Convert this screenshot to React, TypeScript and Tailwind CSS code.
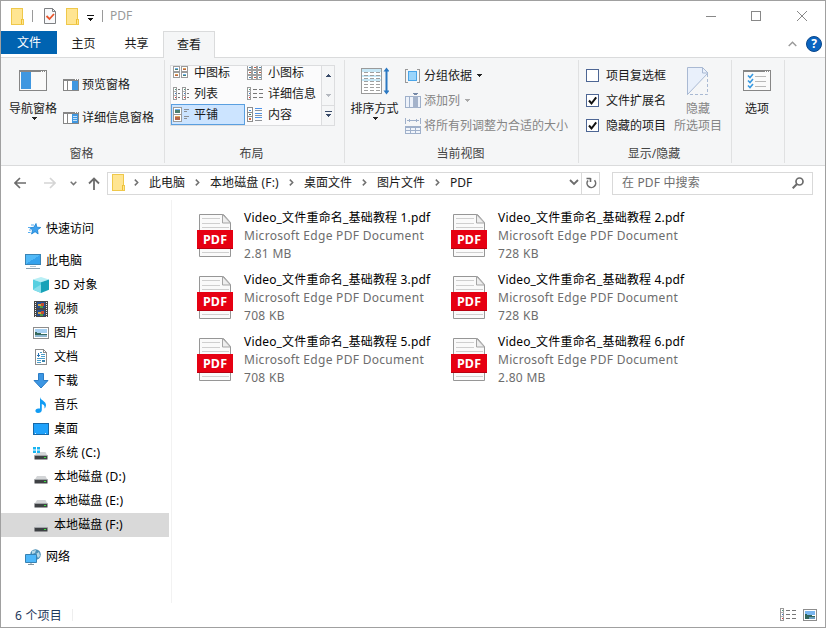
import type { ReactNode } from 'react';
import clsx from 'clsx';

function Svg({ w, h, children, smooth, className }: { w: number; h: number; children: ReactNode; smooth?: boolean; className?: string }) {
    return (
        <svg width={w} height={h} viewBox={`0 0 ${w} ${h}`} fill="none" shapeRendering={smooth ? 'auto' : 'crispEdges'} className={clsx('shrink-0 block', className)}>
            {children}
        </svg>
    );
}

const Folder = () => (
    <Svg w={14} h={17}>
        <path d="M.5 .5h11v11h1v5h-12z" fill="#ffe592" stroke="#efc84a" />
        <path d="M10.500 11v5" stroke="#efc030" />
    </Svg>
);

const CheckDoc = () => (
    <Svg w={12} h={16} smooth>
        <path d="M.5 .5h8l3 3v12h-11z" fill="#f8f9fb" stroke="#7e8083" />
        <path d="M8.500 .5v3h3" stroke="#7e8083" />
        <path d="M2.500 8l3 3 4.500-5" stroke="#e8552c" strokeWidth="1.800" />
    </Svg>
);

const Down = ({ color = '#222', className }: { color?: string; className?: string }) => (
    <Svg w={5} h={3} className={className}>
        <path d="M0 0h5v1h-1v1h-1v1h-1v-1h-1v-1h-1z" fill={color} />
    </Svg>
);

const Chevron = ({ className }: { className?: string }) => (
    <Svg w={5} h={7} smooth className={className}>
        <path d="M.8 .6l2.900 2.900-2.900 2.900" stroke="#707070" strokeWidth="1.500" />
    </Svg>
);

const NavPaneIcon = () => (
    <Svg w={28} h={21}>
        <path d="M0 0h28v21h-28z" fill="#868686" />
        <path d="M1 2h26v18h-26z" fill="#fafafa" />
        <path d="M2 2h10v17h-10z" fill="#3f97e0" />
        <path d="M22 1h1M24 1h1M26 1h1" stroke="#fff" />
    </Svg>
);

const PreviewIcon = ({ details }: { details?: boolean }) => (
    <Svg w={16} h={12}>
        <path d="M0 0h16v12h-16z" fill="#868686" />
        <path d="M1 2h3v9h-3zM5 2h4v9h-4z" fill="#fff" />
        <path d="M9 2h6v9h-6z" fill="#3f97e0" />
        {details && <path d="M10 4.500h4M10 6.500h4M10 8.500h4" stroke="#c4e1fa" />}
        <path d="M12 .5h1M14 .5h1" stroke="#fff" />
    </Svg>
);

const Thumb = ({ x, y, w = 6, h = 5, alt }: { x: number; y: number; w?: number; h?: number; alt?: boolean }) => (
    <g>
        <rect x={x + .5} y={y + .5} width={w} height={h} fill="#fff" stroke="#9b9b9b" />
        <rect x={x + 2} y={y + 2} width={w - 3} height={1} fill={alt ? '#e0a25a' : '#6fb0ec'} />
        <rect x={x + 2} y={y + 3} width={w - 3} height={h - 4} fill={alt ? '#b5664a' : '#4b7f70'} />
    </g>
);

const MediumIcon = () => (
    <Svg w={15} h={13}>
        <Thumb x={0} y={0} /><Thumb x={8} y={0} alt />
        <Thumb x={0} y={6} alt /><Thumb x={8} y={6} />
    </Svg>
);

const SmallIcon = () => (
    <Svg w={16} h={14}>
        {[0, 5, 10].map((y) => [0, 5, 10].map((x) => (
            <g key={`${x}-${y}`}>
                <rect x={x + .5} y={y - .5} width="4" height="4" fill="#fff" stroke="#a0a0a0" />
                <rect x={x + 2} y={y + 1} width="2" height="1" fill={(x + y) % 2 ? '#c15b42' : '#4987b5'} />
            </g>
        )))}
    </Svg>
);

const ListIcon = ({ wide }: { wide?: boolean }) => (
    <Svg w={16} h={13}>
        {(wide ? [0] : [0, 9]).map((x) => (
            <g key={x}>
                <rect x={x + .5} y=".5" width="3" height="12" fill="#fff" stroke="#9a9a9a" />
                <path d={`M${x + 1} 4.500h3M${x + 1} 8.500h3`} stroke="#b0b0b0" />
                <rect x={x + 2} y="2" width="1" height="1" fill="#4c9a7b" />
                <rect x={x + 2} y="6" width="1" height="1" fill="#3c78cc" />
                <rect x={x + 2} y="10" width="1" height="1" fill="#e03030" />
                {!wide && <path d={`M${x + 5} 2.500h2M${x + 5} 6.500h2M${x + 5} 10.500h2`} stroke="#777" />}
            </g>
        ))}
        {wide && <path d="M6 2.500h4M12 2.500h4M6 6.500h4M12 6.500h4M6 10.500h4M12 10.500h4" stroke="#777" />}
    </Svg>
);

const TilesIcon = () => (
    <Svg w={16} h={15}>
        <Thumb x={0} y={0} w={8} h={7} /><Thumb x={0} y={7} w={8} h={7} alt />
        <path d="M11 2.500h5M11 4.500h3M11 9.500h5M11 11.500h3" stroke="#8b8f95" />
    </Svg>
);

const ContentIcon = () => (
    <Svg w={15} h={15}>
        <path d="M.5 .5h5v14h-5zM0 5.500h6M0 9.500h6" fill="#fff" stroke="#8e8e8e" />
        <path d="M2 3h2v1h-2z" fill="#4a90e2" /><path d="M2 7h2v1h-2z" fill="#426d57" /><path d="M2 11h2v2h-2z" fill="#d56a45" />
        <path d="M8 1.500h7M8 6.500h7M8 10.500h7" stroke="#4f93e8" />
        <path d="M8 3.500h7M8 8.500h7M8 13.500h7" stroke="#8f9297" />
    </Svg>
);

const SortIcon = () => (
    <Svg w={28} h={28}>
        <path d="M.5 1.500h20v25h-20z" fill="#fff" stroke="#9a9a9a" />
        <path d="M1 2h19v3h-19zM1 8h19v2h-19zM1 12h19v2h-19z" fill="#c6e7f6" />
        {[5, 8, 11, 14, 17, 20, 23].map((y) => (
            <path key={y} d={`M3 ${y + .5}h4M9 ${y + .5}h4M15 ${y + .5}h4`} stroke="#a0a0a0" />
        ))}
        <path d="M25.500 3v22" stroke="#2b78c2" strokeWidth="2" shapeRendering="auto" />
        <path d="M22.500 4.500l3-4 3 4zM22.500 23.500l3 4 3-4z" fill="#2b78c2" shapeRendering="auto" />
    </Svg>
);

const GroupIcon = () => (
    <Svg w={16} h={14}>
        <path d="M3 .5h-2.500v13h2.500M12 .5h2.500v13h-2.500" stroke="#999" />
        <path d="M3.500 2.500h8v9h-8z" fill="#9bd5fb" stroke="#4aa5e8" />
    </Svg>
);

const AddColumnIcon = () => (
    <Svg w={16} h={15}>
        <path d="M.5 3.500h15v11h-15zM4.500 3v12" fill="#edf2fa" stroke="#9fb0ca" />
        <path d="M8 3h5v12h-5z" fill="#a4b3cb" />
        <path d="M8 0h5v1h-1v1h-3v-1h-1z" fill="#7689a8" />
    </Svg>
);

const FitIcon = () => (
    <Svg w={16} h={16}>
        <path d="M.5 0v6M15.500 0v6M2 2.500h12M4.500 1v3M3.500 2v1M11.500 1v3M12.500 2v1" stroke="#9fb0ca" />
        <path d="M0 8h16v8h-16z" fill="#9fb0ca" />
        <path d="M1 10h4v2h-4zM6 10h4v2h-4zM11 10h4v2h-4zM1 13h4v2h-4zM6 13h4v2h-4zM11 13h4v2h-4z" fill="#f1f5fb" />
    </Svg>
);

const HideIcon = () => (
    <Svg w={22} h={28} smooth>
        <path d="M.5 27.500v-27h15l5.500 5.500z" fill="#e9f0fb" />
        <path d="M.5 27.500v-27h15l5.500 5.500-20.500 21.500" stroke="#a9b9d3" />
        <path d="M15.500 .5v5.500h5.500" stroke="#a9b9d3" />
        <path d="M20.500 7v20.500h-20" stroke="#a9b9d3" strokeDasharray="3 2" />
    </Svg>
);

const OptionsIcon = () => (
    <Svg w={28} h={21}>
        <path d="M0 0h28v21h-28z" fill="#868686" />
        <path d="M1 2h26v18h-26z" fill="#fafafa" />
        <path d="M22 1h1M24 1h1M26 1h1" stroke="#fff" />
        <path d="M12 6.500h11M12 11.500h11M12 16.500h11" stroke="#b8b8b8" />
        <path d="M5 5.500l2 2 3-3.500M5 10.500l2 2 3-3.500M5 15.500l2 2 3-3.500" stroke="#3698e0" strokeWidth="1.600" shapeRendering="auto" />
    </Svg>
);

const PdfIcon = () => (
    <Svg w={36} h={43} smooth className="text-white">
        <path d="M2.500 .5h24l7 8v34h-31z" fill="#fafafa" stroke="#969696" />
        <path d="M25.500 .5v8.500h8z" fill="#eee" stroke="#a5a5a5" />
        <path d="M5 4.500h18M5 9.500h18M5 13.500h27M5 38.500h27" stroke="#cfcfcf" />
        <path d="M0 16h36v19h-36z" fill="#e60012" />
        <path d="M0 34h36v1h-36z" fill="#b80010" />
        <text x="18" y="30" textAnchor="middle" fontSize="12.500" fontWeight="700" fill="currentColor" fontFamily="Noto Sans" textLength="24">PDF</text>
    </Svg>
);

const Drive = ({ system }: { system?: boolean }) => (
    <Svg w={16} h={16} smooth>
        <path d="M4 7h8.500l2 4h-13z" fill="#d3d5d7" />
        <path d="M1.500 10.500h13v4h-13z" fill="#3e4144" />
        <path d="M1.500 10.500h13" stroke="#a2a5a8" />
        <path d="M11 12h2v1h-2z" fill="#38e23c" />
        {system && (
            <>
                <path d="M0 2h7v6h-7z" fill="#fff" />
                <path d="M0 2h3v2.500h-3zM4 2h3v2.500h-3zM0 5.500h3v2.500h-3zM4 5.500h3v2.500h-3z" fill="#18b4f1" />
            </>
        )}
    </Svg>
);

const icons: Record<string, ReactNode> = {
    star: (
        <Svg w={16} h={16} smooth className="ml-1">
            <path d="M9 2.500l.8 3.700 4 .3-3.300 2.300.6 4.200-3-2.300-3.600 2.300 1.200-4-3-2.300 4.200-.4z" fill="#3da1ee" stroke="#1781d2" strokeWidth=".8" />
            <path d="M4 4h3M1 6.500h2.500M2 9h2.500M1 11.500h2.500" stroke="#55adf0" />
        </Svg>
    ),
    pc: (
        <Svg w={16} h={16}>
            <path d="M.5 1.500h15v10h-15z" fill="#51b9f7" stroke="#3a84b5" />
            <path d="M1 11l14-9v9z" fill="#35a2ed" />
            <path d="M5 13.500h6" stroke="#b5c5cf" /><path d="M1 15h14" stroke="#8ba1b0" />
        </Svg>
    ),
    cube: (
        <Svg w={16} h={16} smooth>
            <path d="M8 0l8 2.500-8 2.800-8-2.800z" fill="#b8eff5" />
            <path d="M0 2.500l8 2.800v10.700l-8-3.200z" fill="#56cfe0" />
            <path d="M16 2.500l-8 2.800v10.700l8-3.200z" fill="#17a2b8" />
            <path d="M0 12.500l8-5v8.500z" fill="#87deeb" />
        </Svg>
    ),
    video: (
        <Svg w={16} h={16}>
            <path d="M1 0h14v16h-14z" fill="#474747" />
            <path d="M4 1h8v6h-8zM4 9h8v6h-8z" fill="#254f91" />
            <path d="M5 3h4v2h-4zM5 11h4v2h-4z" fill="#d9a63c" />
            <path d="M8 2h3v3h-3zM8 10h3v3h-3z" fill="#c34d30" />
            <path d="M7 5h3v2h-3zM7 13h3v2h-3z" fill="#4f9a46" />
            <path d="M2.500 1v15M13.500 1v15" stroke="#eee" strokeDasharray="1 1" />
        </Svg>
    ),
    picture: (
        <Svg w={16} h={12}>
            <path d="M.5 .5h15v11h-15z" fill="#fff" stroke="#8d8d8d" />
            <path d="M2 2h12v4h-12z" fill="#a6d0f2" /><path d="M2 5l4 1 4 1h4v1h-12z" fill="#35695c" /><path d="M2 8h12v2h-12z" fill="#8fb7d0" />
        </Svg>
    ),
    doc: (
        <Svg w={12} h={16}>
            <path d="M.5 .5h8l3 3v12h-11z" fill="#fff" stroke="#8d8d8d" />
            <path d="M8.500 .5v3h3" stroke="#8d8d8d" />
            <path d="M5 3.500h2M6 5.500h4M6 7.500h4M2 9.500h8M2 11.500h4M2 13.500h4" stroke="#4b9dc9" />
            <path d="M3.500 4v4M2 6.500h3" stroke="#2b76b6" /><path d="M7 11h3v2h-3z" fill="#3b83ad" />
        </Svg>
    ),
    download: (
        <Svg w={16} h={16} smooth>
            <path d="M5.500 .5h5v7h4.500l-7 7.500-7-7.500h4.500z" fill="#3c96e3" stroke="#2b7cc5" />
        </Svg>
    ),
    music: (
        <Svg w={16} h={16} smooth>
            <path d="M7 0c.5 3.500 6 4 6 8 0 1.500-.8 3-1.500 3.500.5-3-1-4-2.700-4.500v6c0 2-1.500 3-3.800 3-3.500 0-3.500-4.500 .3-4.500h1.700z" fill="#119cf4" />
        </Svg>
    ),
    desktop: (
        <Svg w={16} h={12}>
            <path d="M.5 .5h15v11h-15z" fill="#20a2fb" stroke="#1768a7" />
            <path d="M2 10.500h12" stroke="#d5eafa" strokeDasharray="1 9 1 1" />
        </Svg>
    ),
    network: (
        <Svg w={16} h={16} smooth>
            <circle cx="10.500" cy="5.500" r="5.300" fill="#4d91b8" />
            <path d="M7 2l4-1-1 3-3 1zM11 5l3-2 1 4-2 2z" fill="#b8d9e7" />
            <path d="M.5 5.500h11v8h-11z" fill="#4db7fa" stroke="#3781b1" />
            <path d="M6 14v1M3 15.500h6" stroke="#8295a0" />
        </Svg>
    ),
    drive: <Drive />,
    system: <Drive system />,
};

const sidebar = [
    { icon: 'pc', label: '此电脑', root: true },
    { icon: 'cube', label: '3D 对象', className: 'tracking-[0.2px]' },
    { icon: 'video', label: '视频' },
    { icon: 'picture', label: '图片' },
    { icon: 'doc', label: '文档' },
    { icon: 'download', label: '下载' },
    { icon: 'music', label: '音乐' },
    { icon: 'desktop', label: '桌面' },
    { icon: 'system', label: '系统 (C:)', className: 'tracking-[0.15px]' },
    { icon: 'drive', label: '本地磁盘 (D:)', className: 'tracking-[0.15px]' },
    { icon: 'drive', label: '本地磁盘 (E:)', className: 'tracking-[0.1px]' },
    { icon: 'drive', label: '本地磁盘 (F:)', className: 'tracking-[0.1px]', active: true },
];

const files = ['2.81 MB', '728 KB', '708 KB', '728 KB', '708 KB', '2.80 MB'];

const layouts = [
    { icon: <MediumIcon />, label: '中图标' },
    { icon: <SmallIcon />, label: '小图标' },
    { icon: <ListIcon />, label: '列表' },
    { icon: <ListIcon wide />, label: '详细信息' },
    { icon: <TilesIcon />, label: '平铺', active: true },
    { icon: <ContentIcon />, label: '内容' },
];

function Group({ label, className, children }: { label?: string; className: string; children: ReactNode }) {
    return (
        <div className={clsx('flex flex-col shrink-0 h-[103px] mt-[2px] border-r border-[#e0e1e2]', className)}>
            <div className="flex h-[85px]">{children}</div>
            <div className="text-center leading-[18px] text-[#444] pr-[2px]">{label}</div>
        </div>
    );
}

function BigButton({ icon, label, arrow, className }: { icon: ReactNode; label: string; arrow?: boolean; className: string }) {
    return (
        <div className={clsx('flex flex-col items-center shrink-0', className)}>
            <div className="h-[40px] flex items-center justify-center pt-px">{icon}</div>
            <div className="leading-[17px] text-center whitespace-pre">{label}</div>
            {arrow && <Down className="ml-[2px]" />}
        </div>
    );
}

function SideRow({ icon, label, root, active, className }: { icon: string; label: string; root?: boolean; active?: boolean; className?: string }) {
    return (
        <div className={clsx('flex items-center h-6 w-[168px] whitespace-nowrap', root ? 'pl-6' : 'pl-8', active && 'bg-[#d9d9d9]')}>
            <div className="w-4 flex justify-center">{icons[icon]}</div>
            <span className={clsx('ml-[5px]', className)}>{label}</span>
        </div>
    );
}

function Check({ label, checked }: { label: string; checked?: boolean }) {
    return (
        <div className="flex items-center h-[25px]">
            <Svg w={13} h={13}>
                <path d="M.5 .5h12v12h-12z" fill="#fff" stroke="#4d6694" />
                {checked && <path d="M3 6.500l2.500 3 4.700-6.200" stroke="#111" strokeWidth="2" shapeRendering="auto" />}
            </Svg>
            <span className="ml-[7px]">{label}</span>
        </div>
    );
}

export default function App() {
    return (
        <div className="w-[826px] h-[628px] flex flex-col overflow-hidden border border-[#a0a0a0] bg-white text-[12px] leading-[18px] text-[#1a1a1a] whitespace-nowrap font-['Noto_Sans','Noto_Sans_CJK_SC',sans-serif]">
            {/* Title bar */}
            <div className="flex h-[30px] shrink-0 justify-between">
                <div className="flex items-center pl-[10px]">
                    <Folder />
                    <div className="w-px h-3 bg-[#9a9a9a] ml-[7px] mr-[11px]" />
                    <CheckDoc />
                    <div className="ml-[10px]"><Folder /></div>
                    <Svg w={7} h={6} className="ml-[7px] mt-[3px]">
                        <path d="M0 .5h7" stroke="#111" />
                        <path d="M1 3h5v1h-1v1h-1v1h-1v-1h-1v-1h-1z" fill="#111" />
                    </Svg>
                    <div className="w-px h-3 bg-[#9a9a9a] ml-2 mr-[7px]" />
                    <span className="text-[#999]">PDF</span>
                </div>
                <div className="flex items-center">
                    <div className="w-[45px] flex justify-center"><Svg w={10} h={11}><path d="M0 5.500h10" stroke="#888" /></Svg></div>
                    <div className="w-[45px] flex justify-center"><Svg w={10} h={10}><path d="M.5 .5h9v9h-9z" stroke="#888" /></Svg></div>
                    <div className="w-[47px] flex justify-center"><Svg w={10} h={10} smooth><path d="M0 0l10 10M10 0L0 10" stroke="#888" /></Svg></div>
                </div>
            </div>

            {/* Ribbon tabs */}
            <div className="flex h-[27px] shrink-0 border-b border-[#dadbdc]">
                <div className="w-14 h-[23px] leading-[23px] text-center bg-[#0063b1] text-white">文件</div>
                <div className="w-[53px] leading-[25px] text-center">主页</div>
                <div className="w-[53px] leading-[25px] text-center">共享</div>
                <div className="w-[52px] h-[27px] leading-[25px] text-center bg-[#f5f6f7] border border-b-0 border-[#dadbdc]">查看</div>
                <div className="flex-1 flex justify-end items-center gap-[9px] pr-[3px]">
                    <Svg w={9} h={6} smooth><path d="M.7 5l3.800-3.800 3.800 3.800" stroke="#999" strokeWidth="1.400" /></Svg>
                    <div className="w-4 h-4 rounded-full bg-[#0a64c0] border border-[#0a478b] text-white font-bold text-center leading-[14px]">?</div>
                </div>
            </div>

            {/* Ribbon */}
            <div className="flex h-[108px] shrink-0 bg-[#f5f6f7] border-b border-[#dadbdc]">
                <Group label="窗格" className="w-[164px]">
                    <BigButton className="w-[64px]" icon={<NavPaneIcon />} label="导航窗格" arrow />
                    <div className="pt-[8px]">
                        <div className="flex items-center h-[33px] -ml-[2px] gap-[3px]"><PreviewIcon />预览窗格</div>
                        <div className="flex items-center h-[33px] -ml-[2px] gap-[3px]"><PreviewIcon details />详细信息窗格</div>
                    </div>
                </Group>
                <Group label="布局" className="w-[180px] pl-[5px] pr-[9px]">
                    <div className="flex w-[165px] h-[61px] mt-[5px] border border-[#dcdddf] bg-[#fbfbfc] overflow-hidden">
                        <div className="grid grid-cols-[74px_74px] -mt-[4px] auto-rows-[21px] shrink-0 w-[150px]">
                            {layouts.map(({ icon, label, active }) => (
                                <div key={label} className={clsx('flex items-center border', active ? 'bg-[#cce4ff] border-[#5a9fe0]' : 'border-transparent')}>
                                    <div className="w-[16px] ml-px shrink-0">{icon}</div>
                                    <span className="ml-[5px]">{label}</span>
                                </div>
                            ))}
                        </div>
                        <div className="w-[13px] border-l border-[#dcdddf] flex flex-col bg-[#f5f6f7]">
                            <div className="h-5 flex items-center justify-center"><Down color="#394b69" className="rotate-180" /></div>
                            <div className="h-5 flex items-center justify-center"><Down color="#b5b9c0" /></div>
                            <div className="h-5 flex items-center justify-center border-t border-[#dcdddf] pb-[3px]">
                                <Svg w={7} h={6}><path d="M0 .5h7" stroke="#394b69" /><path d="M1 3h5v1h-1v1h-1v1h-1v-1h-1v-1h-1z" fill="#394b69" /></Svg>
                            </div>
                        </div>
                    </div>
                </Group>
                <Group label="当前视图" className="w-[234px]">
                    <BigButton className="w-[59px]" icon={<SortIcon />} label="排序方式" arrow />
                    <div className="pl-px pt-[3px] [&>div]:flex [&>div]:items-center [&>div]:h-[25px] [&>div]:gap-[3px]">
                        <div><GroupIcon />分组依据<Down className="ml-[2px]" /></div>
                        <div className="text-[#858585]"><AddColumnIcon />添加列<Down color="#aaa" className="ml-[2px]" /></div>
                        <div className="text-[#858585]"><FitIcon />将所有列调整为合适的大小</div>
                    </div>
                </Group>
                <Group label="显示/隐藏" className="w-[153px]">
                    <div className="pl-[7px] pt-[3px] w-[92px]">
                        <Check label="项目复选框" />
                        <Check label="文件扩展名" checked />
                        <Check label="隐藏的项目" checked />
                    </div>
                    <div className="text-[#858585]">
                        <BigButton className="w-[54px]" icon={<HideIcon />} label={'隐藏\n所选项目'} />
                    </div>
                </Group>
                <Group className="w-[53px]">
                    <BigButton className="w-[50px]" icon={<OptionsIcon />} label="选项" />
                </Group>
            </div>

            {/* Address bar */}
            <div className="flex items-center h-[34px] shrink-0 pl-[13px]">
                <Svg w={12} h={12} smooth><path d="M12 6h-11M6 1l-5 5 5 5" stroke="#6c6c6c" strokeWidth="1.700" /></Svg>
                <Svg w={12} h={12} smooth className="ml-[18px]"><path d="M0 6h11M6 1l5 5-5 5" stroke="#d5d5d5" strokeWidth="1.700" /></Svg>
                <Svg w={7} h={5} smooth className="ml-[14px]"><path d="M.7 .8l2.800 2.800 2.800-2.800" stroke="#777" strokeWidth="1.500" /></Svg>
                <Svg w={12} h={13} smooth className="ml-[11px]"><path d="M6 13v-12M1 6.500l5-5 5 5" stroke="#6c6c6c" strokeWidth="1.800" /></Svg>
                <div className="flex items-center w-[493px] h-[23px] ml-[7px] pl-[4px] pb-px border border-[#d9d9d9]">
                    <Folder />
                    <Chevron className="ml-[8px] mr-[10px]" />
                    <span className="w-9">此电脑</span>
                    <Chevron className="mx-[10px]" />
                    <span className="w-[69px] tracking-[0.1px]">本地磁盘 (F:)</span>
                    <Chevron className="mx-[10px]" />
                    <span className="w-12">桌面文件</span>
                    <Chevron className="mx-[10px]" />
                    <span className="w-12">图片文件</span>
                    <Chevron className="mx-[10px]" />
                    <span>PDF</span>
                    <Svg w={10} h={7} smooth className="ml-auto mr-[2px]"><path d="M1 1l4 4 4-4" stroke="#6c6c6c" strokeWidth="1.800" /></Svg>
                    <div className="w-[18px] h-[21px] -mb-px border-l border-[#d9d9d9] flex items-center justify-center">
                        <Svg w={11} h={12} smooth className="ml-[2px]">
                            <path d="M2 3.500a4.300 4.300 0 1 0 6.500-.2M4.500 1v4M.5 1.500h4" stroke="#6c6c6c" strokeWidth="1.600" />
                        </Svg>
                    </div>
                </div>
                <div className="flex items-center justify-between w-[201px] h-[23px] ml-[12px] pl-[9px] pr-[8px] border border-[#d9d9d9] text-[#6d6d6d]">
                    <span className="tracking-[0.15px]">在 PDF 中搜索</span>
                    <Svg w={12} h={12} smooth><circle cx="7.500" cy="4.500" r="3.500" stroke="#6c6c6c" strokeWidth="1.700" /><path d="M5 7l-4.300 4.300" stroke="#6c6c6c" strokeWidth="2" /></Svg>
                </div>
            </div>

            {/* Content */}
            <div className="flex flex-1 min-h-0 text-black">
                <div className="w-[171px] pt-[17px] border-r border-[#f2f2f2]">
                    <SideRow icon="star" label="快速访问" root />
                    <div className="my-2">
                        {sidebar.map((item) => <SideRow key={item.label} {...item} />)}
                    </div>
                    <SideRow icon="network" label="网络" root />
                </div>
                <div className="grid grid-cols-[254px_254px] auto-rows-[62px] pl-[25px] pt-[9px]">
                    {files.map((size, i) => (
                        <div key={i} className="flex">
                            <div className="pt-[5px]"><PdfIcon /></div>
                            <div className="ml-[11px]">
                                <div className="tracking-[0.18px]">Video_文件重命名_基础教程 {i + 1}.pdf</div>
                                <div className="text-[#6d6d6d] tracking-[0.3px]">Microsoft Edge PDF Document</div>
                                <div className="text-[#6d6d6d] tracking-[0.3px]">{size}</div>
                            </div>
                        </div>
                    ))}
                </div>
            </div>

            {/* Status bar */}
            <div className="flex items-center h-[24px] shrink-0 pl-[14px] pr-[8px] text-[#1e395b]">
                <span className="pt-px tracking-[0.2px]">6 个项目</span>
                <div className="w-px h-3 bg-[#eee] ml-[10px]" />
                <div className="ml-auto flex items-center gap-[7px] pb-px">
                    <ListIcon wide />
                    <Svg w={14} h={12}>
                        <path d="M.5 .5h13v11h-13z" fill="#fff" stroke="#8d8d8d" />
                        <path d="M2 2h10v4h-10z" fill="#79b6f0" /><path d="M2 5l4 1 6 1v3h-10z" fill="#32665c" /><path d="M6 8h6v2h-6z" fill="#6b9dbd" />
                    </Svg>
                </div>
            </div>
        </div>
    );
}
